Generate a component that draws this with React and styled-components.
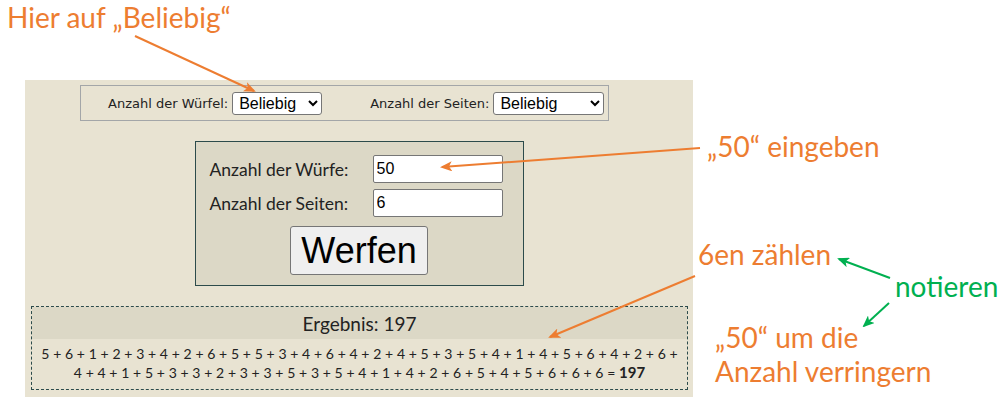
import React from "react";
import styled, { createGlobalStyle } from "styled-components";

const GlobalStyle = createGlobalStyle`
  body {
    margin: 0;
    background: #ffffff;
  }
`;

const rollsA = [5, 6, 1, 2, 3, 4, 2, 6, 5, 5, 3, 4, 6, 4, 2, 4, 5, 3, 5, 4, 1, 4, 5, 6, 4, 2, 6];
const rollsB = [4, 4, 1, 5, 3, 3, 2, 3, 3, 5, 3, 5, 4, 1, 4, 2, 6, 5, 4, 5, 6, 6, 6];
const total = [...rollsA, ...rollsB].reduce((a, b) => a + b, 0);

const App = () => {
  return (
    <Page>
      <GlobalStyle />
      <Panel>
        <SettingsBar>
          <SmallLabel>Anzahl der Würfel:</SmallLabel>
          <Select $width={90} defaultValue="any">
            <option value="any">Beliebig</option>
            <option value="1">1</option>
            <option value="2">2</option>
          </Select>
          <SmallLabel $gap={48}>Anzahl der Seiten:</SmallLabel>
          <Select $width={111} defaultValue="any">
            <option value="any">Beliebig</option>
            <option value="6">6</option>
            <option value="20">20</option>
          </Select>
        </SettingsBar>

        <FormBox>
          <FieldRow>
            <FieldLabel>Anzahl der Würfe:</FieldLabel>
            <Input defaultValue="50" />
          </FieldRow>
          <FieldRow>
            <FieldLabel>Anzahl der Seiten:</FieldLabel>
            <Input defaultValue="6" />
          </FieldRow>
          <ThrowButton>Werfen</ThrowButton>
        </FormBox>

        <ResultBox>
          <ResultHeader>Ergebnis: {total}</ResultHeader>
          <ResultBody>
            <Line>{rollsA.join(" + ")} +</Line>
            <Line>
              {rollsB.join(" + ")} = <Sum>{total}</Sum>
            </Line>
          </ResultBody>
        </ResultBox>
      </Panel>

      <Arrows width="1002" height="397">
        <defs>
          <marker id="headOrange" viewBox="0 0 12 10" refX="10" refY="5" markerWidth="12" markerHeight="10" markerUnits="userSpaceOnUse" orient="auto">
            <path d="M0,0 L12,5 L0,10 L3,5 z" fill="#ed7d31" />
          </marker>
          <marker id="headGreen" viewBox="0 0 12 10" refX="10" refY="5" markerWidth="12" markerHeight="10" markerUnits="userSpaceOnUse" orient="auto">
            <path d="M0,0 L12,5 L0,10 L3,5 z" fill="#00b050" />
          </marker>
        </defs>
        <g strokeWidth="2" fill="none">
          <line x1="135" y1="36" x2="254" y2="91" stroke="#ed7d31" markerEnd="url(#headOrange)" />
          <line x1="700" y1="148" x2="442" y2="167" stroke="#ed7d31" markerEnd="url(#headOrange)" />
          <line x1="695" y1="276" x2="550" y2="337" stroke="#ed7d31" markerEnd="url(#headOrange)" />
          <line x1="890" y1="278" x2="839" y2="259" stroke="#00b050" markerEnd="url(#headGreen)" />
          <line x1="889" y1="303" x2="864" y2="326" stroke="#00b050" markerEnd="url(#headGreen)" />
        </g>
      </Arrows>

      <Note $x={7} $y={3}>Hier auf „Beliebig“</Note>
      <Note $x={707} $y={132}>„50“ eingeben</Note>
      <Note $x={698} $y={240}>6en zählen</Note>
      <Note $x={895} $y={272} $color="#00b050">notieren</Note>
      <Note $x={715} $y={320} $lh={34}>
        „50“ um die
        <br />
        Anzahl verringern
      </Note>
    </Page>
  );
};

const Page = styled.div`
  position: relative;
  width: 1002px;
  height: 397px;
  overflow: hidden;
  padding: 80px 0 0 25px;
  box-sizing: border-box;
  background: #ffffff;
`;

const Panel = styled.div`
  width: 668px;
  height: 317px;
  background: #e8e3d2;
  padding-top: 5px;
  box-sizing: border-box;
  display: flex;
  flex-direction: column;
`;

const SettingsBar = styled.div`
  margin-left: 55px;
  width: 529px;
  height: 36px;
  box-sizing: border-box;
  border: 1px solid #a3a6a8;
  display: flex;
  align-items: center;
  padding-left: 27px;
`;

const SmallLabel = styled.span`
  font-family: "DejaVu Sans", "Liberation Sans", sans-serif;
  font-size: 13px;
  color: #222;
  margin-left: ${(p) => p.$gap || 0}px;
  margin-right: 4px;
`;

const Select = styled.select`
  width: ${(p) => p.$width}px;
  height: 23px;
  font-family: "Liberation Sans", Arial, sans-serif;
  font-size: 16px;
  color: #000;
  background: #fff;
  border: 1px solid #767676;
  border-radius: 3px;
  padding: 0 2px;
`;

const FormBox = styled.div`
  align-self: center;
  margin-top: 20px;
  width: 329px;
  height: 145px;
  box-sizing: border-box;
  border: 1px solid #2c4b4b;
  background: #dcd8c6;
  padding: 13px 0 0 14px;
  display: flex;
  flex-direction: column;
  gap: 6px;
`;

const FieldRow = styled.div`
  display: flex;
  align-items: center;
`;

const FieldLabel = styled.label`
  width: 163px;
  font-family: Lato, "Open Sans", sans-serif;
  font-size: 17.5px;
  color: #222;
`;

const Input = styled.input`
  width: 130px;
  height: 28px;
  box-sizing: border-box;
  border: 1px solid #767676;
  border-radius: 2px;
  background: #fff;
  font-family: "Liberation Sans", Arial, sans-serif;
  font-size: 16px;
  color: #000;
  padding: 0 3px;
`;

const ThrowButton = styled.button`
  align-self: center;
  margin: 3px 0 0 -14px;
  width: 138px;
  height: 49px;
  background: #efefef;
  border: 1px solid #767676;
  border-radius: 3px;
  font-family: "Liberation Sans", Arial, sans-serif;
  font-size: 36px;
  color: #000;
  padding: 0;
`;

const ResultBox = styled.div`
  margin: 20px 0 0 6px;
  width: 657px;
  height: 84px;
  box-sizing: border-box;
  border: 1px dashed #2c4b4b;
  display: flex;
  flex-direction: column;
`;

const ResultHeader = styled.div`
  height: 32px;
  background: #dcd8c6;
  display: flex;
  align-items: center;
  justify-content: center;
  font-family: Lato, "Open Sans", sans-serif;
  font-size: 19px;
  color: #222;
`;

const ResultBody = styled.div`
  padding-top: 6px;
  display: flex;
  flex-direction: column;
  align-items: center;
`;

const Line = styled.div`
  font-family: Lato, "Open Sans", sans-serif;
  font-size: 14px;
  line-height: 18px;
  color: #222;
  white-space: nowrap;
  word-spacing: 0.15px;
`;

const Sum = styled.b`
  font-size: 15px;
`;

const Arrows = styled.svg`
  position: absolute;
  left: 0;
  top: 0;
  pointer-events: none;
`;

const Note = styled.div`
  position: absolute;
  left: ${(p) => p.$x}px;
  top: ${(p) => p.$y}px;
  font-family: Lato, "Open Sans", sans-serif;
  font-size: 28px;
  line-height: ${(p) => (p.$lh ? `${p.$lh}px` : 1)};
  color: ${(p) => p.$color || "#ed7d31"};
  white-space: nowrap;
`;

export default App;
